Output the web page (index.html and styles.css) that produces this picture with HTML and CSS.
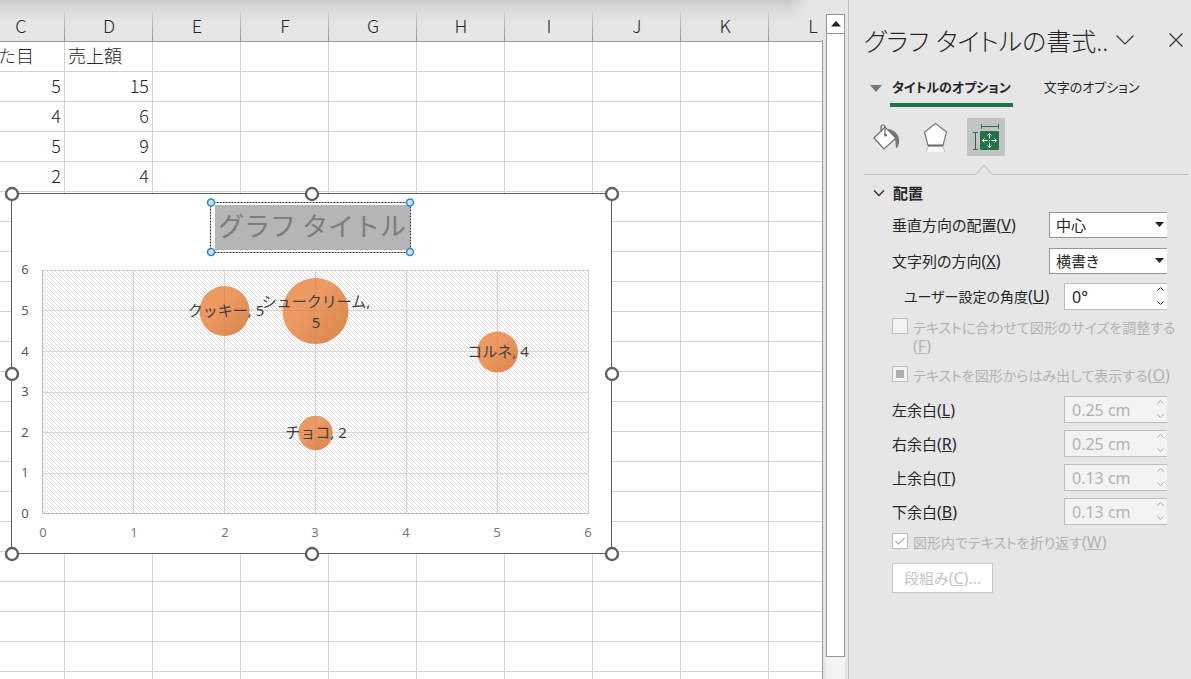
FILE: index.html
```html
<!DOCTYPE html>
<html lang="ja">
<head>
<meta charset="utf-8">
<title>グラフ タイトルの書式設定</title>
<link rel="stylesheet" href="styles.css">
</head>
<body>
<main class="workbook">
  <section class="sheet">
    <table class="grid">
      <thead>
        <tr><th>C</th><th>D</th><th>E</th><th>F</th><th>G</th><th>H</th><th>I</th><th>J</th><th>K</th><th>L</th></tr>
      </thead>
      <tbody>
        <tr><td>見た目<td>売上額<td><td><td><td><td><td><td><td></tr>
        <tr><td class="num">5<td class="num">15<td><td><td><td><td><td><td><td></tr>
        <tr><td class="num">4<td class="num">6<td><td><td><td><td><td><td><td></tr>
        <tr><td class="num">5<td class="num">9<td><td><td><td><td><td><td><td></tr>
        <tr><td class="num">2<td class="num">4<td><td><td><td><td><td><td><td></tr>
        <tr><td><td><td><td><td><td><td><td><td><td></tr>
        <tr><td><td><td><td><td><td><td><td><td><td></tr>
        <tr><td><td><td><td><td><td><td><td><td><td></tr>
        <tr><td><td><td><td><td><td><td><td><td><td></tr>
        <tr><td><td><td><td><td><td><td><td><td><td></tr>
        <tr><td><td><td><td><td><td><td><td><td><td></tr>
        <tr><td><td><td><td><td><td><td><td><td><td></tr>
        <tr><td><td><td><td><td><td><td><td><td><td></tr>
        <tr><td><td><td><td><td><td><td><td><td><td></tr>
        <tr><td><td><td><td><td><td><td><td><td><td></tr>
        <tr><td><td><td><td><td><td><td><td><td><td></tr>
        <tr><td><td><td><td><td><td><td><td><td><td></tr>
        <tr><td><td><td><td><td><td><td><td><td><td></tr>
        <tr><td><td><td><td><td><td><td><td><td><td></tr>
        <tr><td><td><td><td><td><td><td><td><td><td></tr>
        <tr><td><td><td><td><td><td><td><td><td><td></tr>
        <tr><td><td><td><td><td><td><td><td><td><td></tr>
      </tbody>
    </table>
    <svg class="chart" width="616" height="376" viewBox="4 186 616 376" role="img" aria-label="バブル チャート">
      <defs>
        <pattern id="hatch" width="4" height="4" patternUnits="userSpaceOnUse">
          <path d="M-1 -1L5 5M-1 3L1 5M3 -1L5 1" stroke="#dcdcdc" stroke-width="1"/>
        </pattern>
        <linearGradient id="bubble" x1="0" y1="0" x2="1" y2="1">
          <stop offset=".4" stop-color="#ec9a62"/><stop offset=".8" stop-color="#df8b53"/>
        </linearGradient>
      </defs>
      <rect x="11.500" y="193.500" width="600" height="360" fill="#fff" stroke="#606060"/>
      <rect x="42" y="270" width="547" height="244" fill="url(#hatch)"/>
      <path d="M42 270.500H589M42 310.500H589M42 351.500H589M42 392.500H589M42 432.500H589M42 473.500H589M133.500 270V514M224.500 270V514M315.500 270V514M406.500 270V514M497.500 270V514M588.500 270V514" stroke="#d6d6d6"/>
      <path d="M42.500 270V513.500H589" fill="none" stroke="#bfbfbf"/>
      <g class="axis">
        <text x="25" y="274">6</text><text x="25" y="315">5</text><text x="25" y="356">4</text><text x="25" y="396">3</text><text x="25" y="437">2</text><text x="25" y="477">1</text><text x="25" y="518">0</text>
      </g>
      <g class="axis axis-x">
        <text x="43" y="537">0</text><text x="134" y="537">1</text><text x="225" y="537">2</text><text x="315" y="537">3</text><text x="406" y="537">4</text><text x="497" y="537">5</text><text x="588" y="537">6</text>
      </g>
      <g fill="url(#bubble)">
        <circle cx="224.500" cy="311" r="25"/><circle cx="315.500" cy="311" r="33"/><circle cx="497.500" cy="352" r="20.500"/><circle cx="315.500" cy="433" r="17.300"/>
      </g>
      <path d="M200 310.500h50M283 310.500h65M478 351.500h39M299 432.500h33M224.500 286v50M315.500 278v66M497.500 332v40M315.500 416v34" stroke="#d98a55" opacity=".6"/>
      <g class="labels">
        <text x="226" y="316">クッキー, 5</text>
        <text x="316" y="307">シュークリーム,</text><text x="316" y="328">5</text>
        <text x="498" y="357">コルネ, 4</text>
        <text x="316" y="438">チョコ, 2</text>
      </g>
      <rect x="215" y="205" width="195" height="45" fill="#b5b5b5"/>
      <rect x="210.500" y="202.500" width="200" height="50" fill="none" stroke="#303030" stroke-dasharray="2 1"/>
      <text class="title" x="312" y="236">グラフ タイトル</text>
      <g fill="#c3e6f5" stroke="#2f86cc" stroke-width="1.500">
        <circle cx="211" cy="202.500" r="3.500"/><circle cx="410" cy="202.500" r="3.500"/><circle cx="211" cy="252" r="3.500"/><circle cx="410" cy="252" r="3.500"/>
      </g>
      <g fill="#fff" stroke="#606060" stroke-width="2.400">
        <circle cx="12" cy="194" r="6"/><circle cx="312" cy="194" r="6"/><circle cx="612" cy="194" r="6"/><circle cx="12" cy="374" r="6"/><circle cx="612" cy="374" r="6"/><circle cx="12" cy="554" r="6"/><circle cx="312" cy="554" r="6"/><circle cx="612" cy="554" r="6"/>
      </g>
    </svg>
  </section>
  <div class="scrollbar">
    <button class="scroll-up" aria-label="上へ"><svg width="10" height="6" viewBox="0 0 10 6"><path d="M0 5.500L5 0L10 5.500Z" fill="#222"/></svg></button>
    <div class="thumb"></div>
    <div class="track"></div>
  </div>
  <aside class="pane">
    <header class="pane-head">
      <h1>グラフ タイトルの書式..</h1>
      <button class="plain menu" aria-label="作業ウィンドウのオプション"><svg width="18" height="10" viewBox="0 0 18 10"><path d="M.500.500L9 9L17.500.500" fill="none" stroke="#333" stroke-width="1.200"/></svg></button>
      <button class="plain close" aria-label="閉じる"><svg width="14" height="14" viewBox="0 0 14 14"><path d="M.500.500L13.500 13.500M13.500.500L.500 13.500" stroke="#333" stroke-width="1.200"/></svg></button>
    </header>
    <nav class="tabs">
      <svg class="tri" width="12" height="7" viewBox="0 0 12 7"><path d="M0 0H12L6 7Z" fill="#777"/></svg>
      <button class="tab active">タイトルのオプション</button>
      <button class="tab">文字のオプション</button>
    </nav>
    <div class="icons">
      <button class="icon" aria-label="塗りつぶしと線"><svg width="38" height="38" viewBox="-2 0 38 38">
        <path d="M19 11C26 12 31 17 30 25Q29 30 27 30L26 21L20 14Z" fill="#777"/>
        <path d="M5 20L16 9L27 20L15 31Z" fill="#fff" stroke="#6b6b6b" stroke-width="1.200"/>
        <path d="M12 14V9Q12 7 14 7Q16 7 16 9V17" fill="none" stroke="#6b6b6b" stroke-width="1.200"/><circle cx="16.500" cy="17" r="1.500" fill="#6b6b6b"/>
      </svg></button>
      <button class="icon" aria-label="効果"><svg width="38" height="38" viewBox="0 0 38 38">
        <path d="M11 29H26L28 34H9Z" fill="#f6f6f6"/><path d="M11 29L9 34M26 29L28 34" stroke="#bbb"/>
        <path d="M18.500 5.500L29.500 14L26 27.500H11L7.500 14Z" fill="#fff" stroke="#777" stroke-width="1.200"/><path d="M11 27.500H26" stroke="#666" stroke-width="2"/>
      </svg></button>
      <button class="icon selected" aria-label="サイズとプロパティ"><svg width="38" height="38" viewBox="0 0 38 38">
        <rect x="13" y="13" width="19" height="19" rx="1" fill="#217346"/>
        <path d="M14.500 6V11M31.500 6V11M14 8.500H32M6 14.500H11M6 31.500H11M8.500 14V32" stroke="#217346" fill="none"/>
        <path d="M22.500 15.500V20.500M22.500 24.500V29.500M15.500 22.500H20.500M24.500 22.500H29.500M20.500 17.500L22.500 15.500L24.500 17.500M20.500 27.500L22.500 29.500L24.500 27.500M17.500 20.500L15.500 22.500L17.500 24.500M27.500 20.500L29.500 22.500L27.500 24.500" fill="none" stroke="#fff"/><path d="M22 22.500h1" stroke="#fff"/>
      </svg></button>
    </div>
    <div class="divider"><i class="line-start"></i><svg width="18" height="12" viewBox="0 0 18 12"><path d="M0 11.500L1 11.500L9 2L17 11.500H18" fill="none" stroke="#bdbdbd"/></svg><i class="line-end"></i></div>
    <form class="form">
      <h2><svg width="12" height="7" viewBox="0 0 12 7"><path d="M1 .500L6 5.500L11 .500" fill="none" stroke="#333" stroke-width="1.500"/></svg>配置</h2>
      <div class="row"><label for="valign">垂直方向の配置<span class="key">(<u>V</u>)</span></label>
        <span class="combo"><select id="valign"><option>中心</option></select><svg width="9" height="5" viewBox="0 0 9 5"><path d="M0 0H9L4.500 5Z" fill="#222"/></svg></span></div>
      <div class="row"><label for="dir">文字列の方向<span class="key">(<u>X</u>)</span></label>
        <span class="combo"><select id="dir"><option>横書き</option></select><svg width="9" height="5" viewBox="0 0 9 5"><path d="M0 0H9L4.500 5Z" fill="#222"/></svg></span></div>
      <div class="row angle"><label for="angle">ユーザー設定の角度<span class="key">(<u>U</u>)</span></label>
        <span class="spin"><input id="angle" type="text" value="0°"><svg width="7" height="18" viewBox="0 0 7 18"><path d="M.500 3.500L3.500.500L6.500 3.500M.500 14.500L3.500 17.500L6.500 14.500"/></svg></span></div>
      <div class="check"><input type="checkbox" id="fit" disabled><label for="fit">テキストに合わせて図形のサイズを調整する<br><span class="key">(<u>F</u>)</span></label></div>
      <div class="check overflow"><input type="checkbox" id="over" class="mixed" disabled><label for="over">テキストを図形からはみ出して表示する<span class="key">(<u>O</u>)</span></label></div>
      <div class="row margin"><label for="ml">左余白<span class="key">(<u>L</u>)</span></label>
        <span class="spin"><input id="ml" type="text" value="0.25 cm" disabled><svg width="7" height="18" viewBox="0 0 7 18"><path d="M.500 3.500L3.500.500L6.500 3.500M.500 14.500L3.500 17.500L6.500 14.500"/></svg></span></div>
      <div class="row margin"><label for="mr">右余白<span class="key">(<u>R</u>)</span></label>
        <span class="spin"><input id="mr" type="text" value="0.25 cm" disabled><svg width="7" height="18" viewBox="0 0 7 18"><path d="M.500 3.500L3.500.500L6.500 3.500M.500 14.500L3.500 17.500L6.500 14.500"/></svg></span></div>
      <div class="row margin"><label for="mt">上余白<span class="key">(<u>T</u>)</span></label>
        <span class="spin"><input id="mt" type="text" value="0.13 cm" disabled><svg width="7" height="18" viewBox="0 0 7 18"><path d="M.500 3.500L3.500.500L6.500 3.500M.500 14.500L3.500 17.500L6.500 14.500"/></svg></span></div>
      <div class="row margin"><label for="mb">下余白<span class="key">(<u>B</u>)</span></label>
        <span class="spin"><input id="mb" type="text" value="0.13 cm" disabled><svg width="7" height="18" viewBox="0 0 7 18"><path d="M.500 3.500L3.500.500L6.500 3.500M.500 14.500L3.500 17.500L6.500 14.500"/></svg></span></div>
      <div class="check wrap"><span class="tickbox"><input type="checkbox" id="wrap" checked disabled><svg width="10" height="8" viewBox="0 0 10 8"><path d="M.500 4L3.500 7L9.500 1" fill="none" stroke="#b5b5b5" stroke-width="1.300"/></svg></span><label for="wrap">図形内でテキストを折り返す<span class="key">(<u>W</u>)</span></label></div>
      <button class="columns" type="button" disabled>段組み<span class="key">(<u>C</u>)...</span></button>
    </form>
  </aside>
</main>
</body>
</html>
```
FILE: styles.css
```css
* { box-sizing: border-box; }
body {
  margin: 0;
  background: #e6e6e6;
  color: #262626;
  font-family: "Noto Sans", "Noto Sans CJK JP", sans-serif;
}
button, input, select { font: inherit; color: inherit; border-radius: 0; margin: 0; }
.workbook { display: flex; height: 100vh; overflow: hidden; }

/* Worksheet */
.sheet { position: relative; flex: 1; min-width: 0; overflow: hidden; border-right: 1px solid #969696; border-image: linear-gradient(#e6e6e6 41px, #969696 41px) 1; }
.grid {
  width: 880px;
  margin-left: -23px;
  table-layout: fixed;
  border-collapse: separate;
  border-spacing: 0;
  font: 300 18px/24px "Noto Sans CJK JP", sans-serif;
  background: #fff;
}
.grid thead tr { background: linear-gradient(90deg, transparent 812px, #e6e6e6 832px), linear-gradient(#c9c9c9, #d8d8d8 8px, #e6e6e6 22px); }
.grid th {
  height: 42px;
  padding: 9px 0 0;
  font-weight: 300;
  border-bottom: 1px solid #969696;
  background: linear-gradient(#d0d0d0, #969696) right bottom / 1px 29px no-repeat;
}
.grid td { height: 30px; padding: 1px 3px 0; vertical-align: top; border: solid #d2d2d2; border-width: 0 1px 1px 0; }
.grid .num { text-align: right; }

.chart { position: absolute; left: 4px; top: 186px; }
.chart text { text-anchor: middle; }
.axis { font: 13px "Noto Sans", sans-serif; fill: #595959; }
.axis-x { fill: #7a7a7a; }
.labels { font: 15px "Noto Sans", "Noto Sans CJK JP", sans-serif; fill: #404040; }
.title { font: 26px "Noto Sans CJK JP", sans-serif; fill: #7c7c7c; }

.scrollbar { display: flex; flex-direction: column; width: 26px; padding: 14px 3px 0 3px; border-right: 1px solid #bdbdbd; }
.scroll-up { height: 20px; padding: 0; display: grid; place-items: center; background: #fff; border: 1px solid #969696; }
.thumb { height: 624px; flex-shrink: 1; background: #fff; border: 1px solid #969696; border-top: 0; }
.track { flex: 1 0 22px; background: #f3f3f3; }

/* Task pane */
.pane { width: 342px; padding: 20px 3px 0 15px; font-size: 15px; line-height: 20px; font-feature-settings: "palt"; }
.pane-head { display: flex; align-items: center; height: 40px; }
.pane-head h1 { width: 252px; margin: 0; padding-top: 2px; font-size: 25px; font-weight: 300; line-height: 38px; white-space: nowrap; }
.plain { padding: 0; border: 0; background: none; display: grid; place-items: center; }
.close { margin-left: 35px; }
.tabs { display: flex; align-items: flex-end; height: 47px; padding-left: 6px; }
.tri { flex: none; margin: 0 8px 15px 0; }
.tab { flex: none; height: 34px; margin-right: 31px; padding: 0 0 3px; border: 0; border-bottom: 4px solid transparent; background: none; white-space: nowrap; font-size: 13px; }
.tab.active { padding: 0 2px 3px; font-weight: 700; border-color: #217346; }
.icons { display: flex; gap: 12px; padding: 11px 0 8px 3px; }
.icon { width: 38px; height: 38px; padding: 0; border: 0; background: none; }
.icon svg { display: block; }
.selected { background: #c3c3c3; }
.divider { display: flex; align-items: flex-end; height: 11px; }
.divider i { height: 1px; background: #bdbdbd; }
.line-start { width: 111px; }
.line-end { flex: 1; }
.form { padding: 8px 21px 0 28px; }
.form h2 { display: flex; align-items: center; gap: 8px; margin: 0 0 9px -19px; font-size: 15px; line-height: 20px; }
.key { font-size: 16px; }
.row { display: flex; align-items: center; justify-content: space-between; height: 26px; margin-bottom: 10px; white-space: nowrap; }
.combo, .spin { position: relative; display: block; width: 118px; height: 26px; }
.combo svg { position: absolute; right: 3px; top: 10px; }
.combo select { appearance: none; width: 100%; height: 100%; padding: 0 6px; background: #fff; border: 1px solid #969696; border-right: 0; }
.spin { width: 103px; height: 27px; }
.spin input { width: 100%; height: 100%; padding: 0 7px; font-size: 16px; background: #fff; border: 1px solid #bdbdbd; border-right: 0; }
.spin input:disabled { background: #f3f3f3; color: #b2b2b2; }
.spin svg { position: absolute; right: 3px; top: 4px; fill: none; stroke: #444; }
.spin input:disabled + svg { stroke: #aaa; }
.angle { height: 27px; margin: -1px 0 8px; padding-left: 12px; font-size: 14px; }
.check { display: flex; align-items: flex-start; gap: 5px; margin-right: -16px; color: #b2b2b2; font-size: 14px; line-height: 19px; white-space: nowrap; }
.check input { appearance: none; display: block; flex: none; width: 16px; height: 16px; border: 1px solid #bdbdbd; background: #f3f3f3; }
.check .mixed { background: linear-gradient(#b0b0b0, #b0b0b0) center / 8px 8px no-repeat #f3f3f3; }
.overflow { margin-top: 10px; margin-bottom: 11px; }
.margin { height: 27px; margin-bottom: 7px; }
.tickbox { position: relative; }
.tickbox input { background: #fff; }
.tickbox svg { position: absolute; left: 3px; top: 4px; }
.wrap { margin-top: 8px; }
.columns { height: 30px; margin-top: 11px; padding: 0 11px; background: #fff; border: 1px solid #c6c6c6; color: #c6c6c6; }
```
